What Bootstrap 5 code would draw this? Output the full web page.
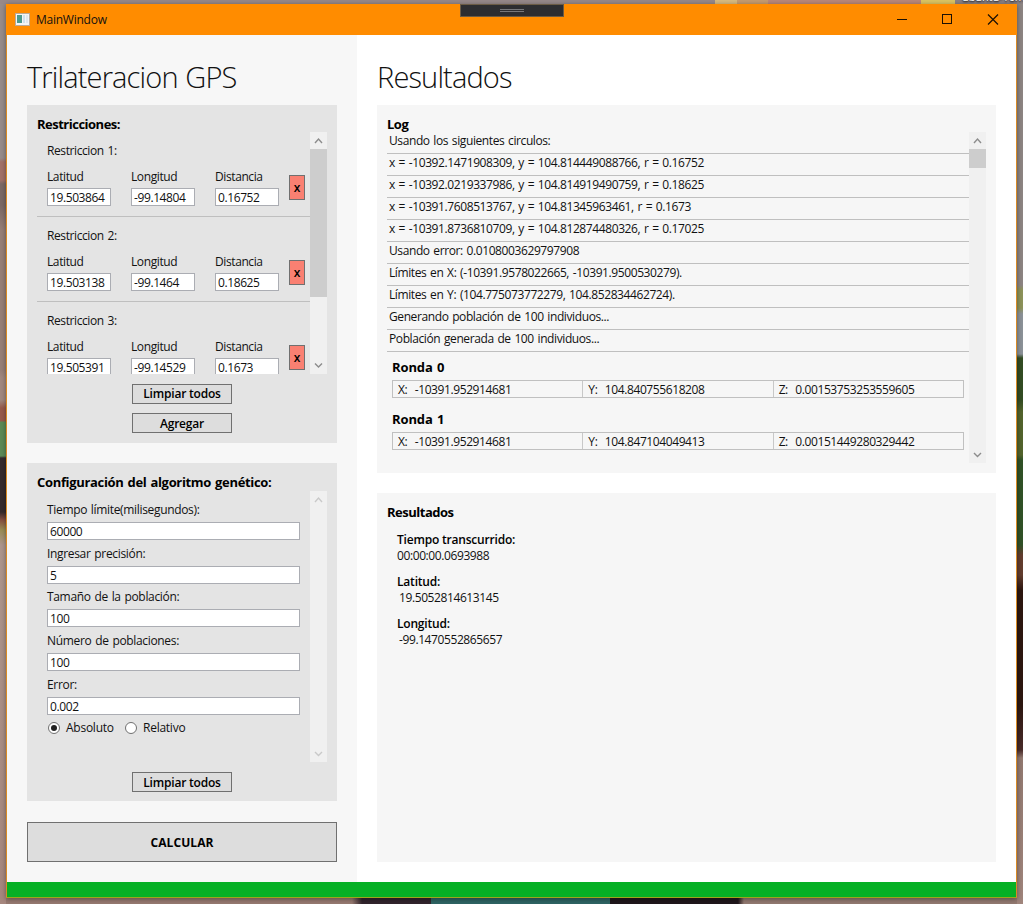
<!DOCTYPE html>
<html lang="es">
<head>
<meta charset="utf-8">
<title>MainWindow</title>
<link href="https://cdn.jsdelivr.net/npm/bootstrap@5.3.0/dist/css/bootstrap.min.css" rel="stylesheet">
<script src="https://cdn.jsdelivr.net/npm/bootstrap@5.3.0/dist/js/bootstrap.bundle.min.js"></script>
<style>
*{border-radius:0!important}
html,body{height:100%;overflow:hidden}
body{font:12px/16px "Open Sans","Noto Sans",sans-serif;letter-spacing:-.4px;word-spacing:1px;color:#111;background:#a0857c}
.desk{position:relative;width:1023px;height:904px;padding:4px 6px 6px;
 background:
 linear-gradient(90deg,#97898a 0 715px,#d8bb80 715px 737px,#c69c70 737px 768px,#ba887a 768px 921px,#dcc562 921px 955px,#8b8284 955px) 0 0/1023px 4px no-repeat,
 linear-gradient(#978c8b 0 158px,#a37168 162px 180px,#7b6965 184px 205px,#977f77 230px 370px,#a1887f 378px 400px,#985a4b 408px 421px,#5c8a55 422px 456px,#352a2c 458px 512px,#875041 520px,#9a8d55 530px,#ad968d 545px,#a6877e 900px) 0 0/6px 904px no-repeat,
 linear-gradient(#8d8583 0 285px,#8d935a 290px 308px,#8c9298 314px 354px,#344d24 358px 400px,#53642c 412px 455px,#315227 460px 545px,#633d2e 555px 575px,#2d1710 590px 705px,#4a2c2a 750px,#927970 758px,#a0857c) 1017px 0/6px 904px no-repeat,
 linear-gradient(90deg,#967970 0 352px,#31242c 362px 431px,#2e6463 431px 610px,#20161b 610px 738px,#927970 744px) 0 898px/1023px 6px no-repeat}
.desk-label{position:absolute;left:962px;top:-10px;color:#fff;font-size:11px;line-height:14px;letter-spacing:-.1px;text-shadow:0 1px 2px #000;height:14px;white-space:nowrap}
.win{position:relative;width:1011px;height:894px;border:1px solid #d98b25;border-bottom-color:#9da51c;border-top:0;background:#fff;box-shadow:0 1px 5px rgba(0,0,0,.4)}
.titlebar{height:31px;background:#ff8c00;margin:0 -1px;padding-left:9px}
.titlebar svg{display:block}
.win-name{margin-left:6px;letter-spacing:-.25px}
.grip{position:absolute;left:453px;top:0;width:104px;height:13px;background:#2d2d30;border:1px solid #6b5b45}
.grip i{display:block;width:24px;height:3px;margin:4px auto;border:solid #77777a;border-width:1px 0}
.side{width:350px;flex:none;background:#f7f7f7;padding:20px}
.main{padding:20px;min-width:0}
.page-title{font-size:29px;font-weight:300;line-height:43px;height:50px;letter-spacing:-.85px;margin:0}
.panel{background:#e4e4e4;padding:10px}
.panel-soft{background:#f6f6f6}
.panel h2{font-size:13px;font-weight:700;line-height:19px;height:17px;letter-spacing:-.5px;margin:0;color:#000}
.sbar{width:17px;background:#f0f0f0;flex:none}
.sbar i{display:block;background:#cdcdcd}
.sbar svg{display:block;flex:none}
.item{height:85px;border-bottom:1px solid #bfbfbf;padding:11px 5px 0 10px}
.fld{width:64px}
.inp{height:18px;border:1px solid #abadb3;background:#fff;padding:0 2px;line-height:18px;color:#111;white-space:nowrap}
.b{background:#ddd;border:1px solid #707070;color:#000;font-weight:600;padding:0;text-align:center;letter-spacing:-.2px;word-spacing:0;width:100px;height:20px;line-height:19px;display:block}
.b-x{background:#fa8072;width:16px;height:25px;line-height:22px}
.logrow{height:22px;border-bottom:1px solid #bfbfbf;padding:1px 2px 0}
.ronda{font-size:13px;font-weight:700;letter-spacing:-.1px;color:#000}
.cells{height:18px;border:1px solid #c0c0c0;line-height:17px}
.cells>div{flex:1 1 0;padding-left:5px;border-left:1px solid #c8c8c8;white-space:pre}
.cells>div:first-child{border-left:0}
.cfg{height:43.7px}
.cfg-label{height:20px;letter-spacing:-.33px}
.rad{width:12px;height:12px;border:1px solid #707070;border-radius:50%!important;background:#fff;display:flex;align-items:center;justify-content:center}
.rad i{width:6px;height:6px;border-radius:50%!important;background:#222}
.res b{display:block;font-weight:600;letter-spacing:-.2px;word-spacing:0;color:#000}
.statusbar{height:15px;background:#06b025}
</style>
</head>
<body>
<div class="desk">
<div class="desk-label">ubuntu-16m</div>
<div class="win d-flex flex-column">
 <div class="titlebar d-flex align-items-center">
  <svg width="15" height="13" viewBox="0 0 15 13"><rect x=".5" y=".5" width="14" height="12" fill="#f4f4f4" stroke="#b9a99a"/><path d="M2 2h5v8H2z" fill="#4b9a8d"/><path d="M8 2h2v8H8z" fill="#cfe0ee"/><path d="M11 2h2v8h-2z" fill="#dfe6ee"/></svg>
  <span class="win-name">MainWindow</span>
  <svg class="ms-auto" width="128" height="31" viewBox="0 0 128 31" fill="none" stroke="#1a1005" shape-rendering="crispEdges"><path d="M8 15.5h10M53.5 10.5h9v9h-9z"/><path d="M99 10.500l10 10M109 10.500l-10 10" stroke-width="1.2" shape-rendering="auto"/></svg>
 </div>
 <div class="grip"><i></i></div>
 <div class="d-flex flex-grow-1">
  <div class="side">
   <h1 class="page-title">Trilateracion GPS</h1>
   <section class="panel" style="height:338px">
    <h2>Restricciones:</h2>
    <div class="d-flex overflow-hidden" style="height:242px">
     <div class="flex-grow-1" id="restr"></div>
     <div class="sbar d-flex flex-column"><svg width="17" height="17" fill="none" stroke="#8c8c8c" stroke-width="1.4"><path d="M5 11l3.500-4 3.500 4"/></svg><i style="height:148px"></i><svg class="mt-auto" width="17" height="17" fill="none" stroke="#8c8c8c" stroke-width="1.4"><path d="M5 6.500l3.500 3.500L12 6.500"/></svg></div>
    </div>
    <div class="d-flex flex-column align-items-center" style="gap:9px;padding-top:10px"><button class="b" style="line-height:18px">Limpiar todos</button><button class="b">Agregar</button></div>
   </section>
   <section class="panel" style="height:338px;margin-top:20px">
    <h2 style="height:18px;letter-spacing:-.33px">Configuración del algoritmo genético:</h2>
    <div class="d-flex" style="height:271px">
     <div class="flex-grow-1" style="padding:11px 10px 0">
      <div id="cfg"></div>
      <div class="d-flex align-items-center" style="padding-left:1px;letter-spacing:-.25px"><span class="rad"><i></i></span><span style="margin-left:6px;width:59px">Absoluto</span><span class="rad"></span><span style="margin-left:6px">Relativo</span></div>
     </div>
     <div class="sbar d-flex flex-column"><svg width="17" height="17" fill="none" stroke="#c9c9c9" stroke-width="1.4"><path d="M5 11l3.500-4 3.500 4"/></svg><svg class="mt-auto" width="17" height="17" fill="none" stroke="#c9c9c9" stroke-width="1.4"><path d="M5 7l3.500 3.500L12 7"/></svg></div>
    </div>
    <button class="b mx-auto" style="margin-top:10px;line-height:20px">Limpiar todos</button>
   </section>
   <button class="b w-100" style="height:40px;margin-top:21px;font-weight:700;line-height:39px;letter-spacing:.1px">CALCULAR</button>
  </div>
  <div class="main flex-grow-1">
   <h1 class="page-title">Resultados</h1>
   <section class="panel panel-soft" style="height:368px">
    <h2>Log</h2>
    <div class="d-flex" style="height:331px">
     <div class="flex-grow-1">
      <div id="log"></div>
      <div id="rounds" style="padding:0 5px"></div>
     </div>
     <div class="sbar d-flex flex-column"><svg width="17" height="17" fill="none" stroke="#8c8c8c" stroke-width="1.4"><path d="M5 11l3.500-4 3.500 4"/></svg><i style="height:19px"></i><svg class="mt-auto" width="17" height="17" fill="none" stroke="#8c8c8c" stroke-width="1.4"><path d="M5 7l3.500 3.500L12 7"/></svg></div>
    </div>
   </section>
   <section class="panel panel-soft" style="height:369px;margin-top:20px">
    <h2>Resultados</h2>
    <div class="res" style="padding:12px 10px">
     <div style="height:42px"><b>Tiempo transcurrido:</b>00:00:00.0693988</div>
     <div style="height:42px"><b>Latitud:</b><span style="margin-left:2px">19.5052814613145</span></div>
     <div><b>Longitud:</b><span style="margin-left:2px">-99.1470552865657</span></div>
    </div>
   </section>
  </div>
 </div>
 <div class="statusbar"></div>
</div>
</div>
<script>
const field=(l,v)=>`<div class="fld"><div style="height:19px">${l}</div><div class="inp">${v}</div></div>`;
document.getElementById('restr').innerHTML=[['19.503864','-99.14804','0.16752'],['19.503138','-99.1464','0.18625'],['19.505391','-99.14529','0.1673']]
 .map((r,i)=>`<div class="item"><div style="height:26px">Restriccion ${i+1}:</div><div class="d-flex" style="gap:20px">${field('Latitud',r[0])}${field('Longitud',r[1])}${field('Distancia',r[2])}<button class="b b-x" style="margin:6px 0 0 -10px">x</button></div></div>`).join('');
document.getElementById('cfg').innerHTML=[['Tiempo límite(milisegundos):','60000'],['Ingresar precisión:','5'],['Tamaño de la población:','100'],['Número de poblaciones:','100'],['Error:','0.002']]
 .map(r=>`<div class="cfg"><div class="cfg-label">${r[0]}</div><div class="inp">${r[1]}</div></div>`).join('');
document.getElementById('log').innerHTML=['Usando los siguientes circulos:','x = -10392.1471908309, y = 104.814449088766, r = 0.16752','x = -10392.0219337986, y = 104.814919490759, r = 0.18625','x = -10391.7608513767, y = 104.81345963461, r = 0.1673','x = -10391.8736810709, y = 104.812874480326, r = 0.17025','Usando error: 0.0108003629797908','Límites en X: (-10391.9578022665, -10391.9500530279).','Límites en Y: (104.775073772279, 104.852834462724).','Generando población de 100 individuos...','Población generada de 100 individuos...']
 .map(t=>`<div class="logrow">${t}</div>`).join('');
document.getElementById('rounds').innerHTML=[['-10391.952914681','104.840755618208','0.00153753253559605'],['-10391.952914681','104.847104049413','0.00151449280329442']]
 .map((r,i)=>`<div style="height:51.5px;padding-top:7px"><div class="ronda" style="height:21px">Ronda ${i}</div><div class="cells d-flex"><div>X:  ${r[0]}</div><div>Y:  ${r[1]}</div><div>Z:  ${r[2]}</div></div></div>`).join('');
</script>
</body>
</html>
